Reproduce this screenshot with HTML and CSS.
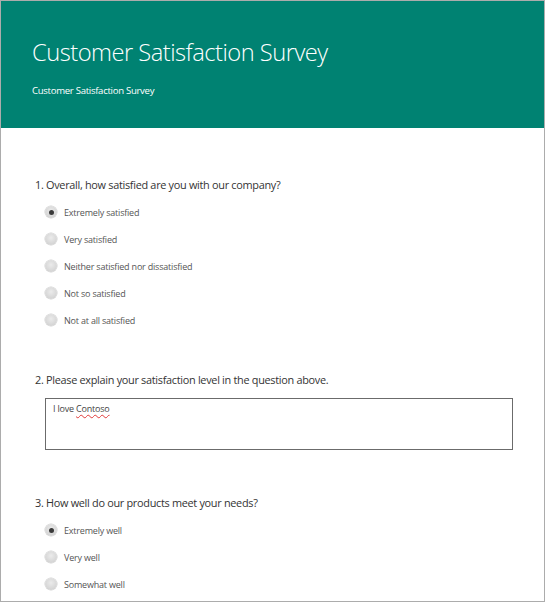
FILE: index.html
```html
<!DOCTYPE html>
<html lang="en">
<head>
<meta charset="utf-8">
<title>Customer Satisfaction Survey</title>
<link rel="stylesheet" href="styles.css">
</head>
<body>
<div class="frame">
  <header class="hero">
    <h1 class="hero-title">Customer Satisfaction Survey</h1>
    <p class="hero-sub">Customer Satisfaction Survey</p>
  </header>
  <main class="form">
    <section class="question">
      <h2 class="q-title">1. Overall, how satisfied are you with our company?</h2>
      <ul class="options">
        <li class="option"><span class="radio checked"></span><span class="opt-label">Extremely satisfied</span></li>
        <li class="option"><span class="radio"></span><span class="opt-label">Very satisfied</span></li>
        <li class="option"><span class="radio"></span><span class="opt-label">Neither satisfied nor dissatisfied</span></li>
        <li class="option"><span class="radio"></span><span class="opt-label">Not so satisfied</span></li>
        <li class="option"><span class="radio"></span><span class="opt-label">Not at all satisfied</span></li>
      </ul>
    </section>
    <section class="question">
      <h2 class="q-title">2. Please explain your satisfaction level in the question above.</h2>
      <div class="textbox">I love <span class="misspelled">Contoso</span></div>
    </section>
    <section class="question">
      <h2 class="q-title">3. How well do our products meet your needs?</h2>
      <ul class="options">
        <li class="option"><span class="radio checked"></span><span class="opt-label">Extremely well</span></li>
        <li class="option"><span class="radio"></span><span class="opt-label">Very well</span></li>
        <li class="option"><span class="radio"></span><span class="opt-label">Somewhat well</span></li>
      </ul>
    </section>
  </main>
</div>
</body>
</html>
```
FILE: styles.css
```css
* { box-sizing: border-box; }
html, body { margin: 0; padding: 0; }
body {
  width: 545px;
  height: 602px;
  overflow: hidden;
  background: #ffffff;
  font-family: "Open Sans", "Noto Sans", sans-serif;
}
.frame {
  width: 545px;
  height: 602px;
  border: 1px solid #acacac;
  overflow: hidden;
  background: #ffffff;
}
.hero {
  background: #008272;
  height: 127px;
  padding: 33px 0 0 31px;
  color: #ffffff;
}
.hero-title {
  margin: 0;
  font-weight: 300;
  font-size: 23.7px;
  line-height: 36px;
  letter-spacing: -0.5px;
}
.hero-sub {
  margin: 14px 0 0 0;
  font-size: 9.6px;
  line-height: 14px;
  letter-spacing: -0.3px;
}
.form {
  padding: 48px 0 0 34px;
}
.question {
  margin-bottom: 44px;
}
.q-title {
  margin: 0;
  font-weight: 400;
  font-size: 10.9px;
  line-height: 18px;
  color: #333333;
  letter-spacing: -0.3px;
}
.options {
  list-style: none;
  margin: 11px 0 0 0;
  padding: 0 0 0 10px;
  display: flex;
  flex-direction: column;
  gap: 13px;
}
.option {
  display: flex;
  align-items: center;
  gap: 7px;
  height: 14px;
}
.radio {
  width: 12px;
  height: 12px;
  border-radius: 50%;
  background: radial-gradient(circle at 50% 40%, #ebebeb 0%, #d6d6d6 65%, #c8c8c8 100%);
  box-shadow: 0 0 0 0.5px #cfcfcf;
  position: relative;
  flex: none;
}
.radio.checked::after {
  content: "";
  position: absolute;
  left: 3.5px;
  top: 3.5px;
  width: 5px;
  height: 5px;
  border-radius: 50%;
  background: #3a3a3a;
}
.opt-label {
  font-size: 9px;
  color: #555555;
  letter-spacing: -0.2px;
}
.textbox {
  margin: 9px 0 0 10px;
  width: 468px;
  height: 52px;
  border: 1px solid #6b6b6b;
  padding: 3px 7px;
  font-size: 9px;
  letter-spacing: -0.2px;
  color: #444444;
}
.misspelled {
  text-decoration: underline wavy #e03a3a;
  text-decoration-thickness: 1px;
  text-underline-offset: 2px;
}
```
